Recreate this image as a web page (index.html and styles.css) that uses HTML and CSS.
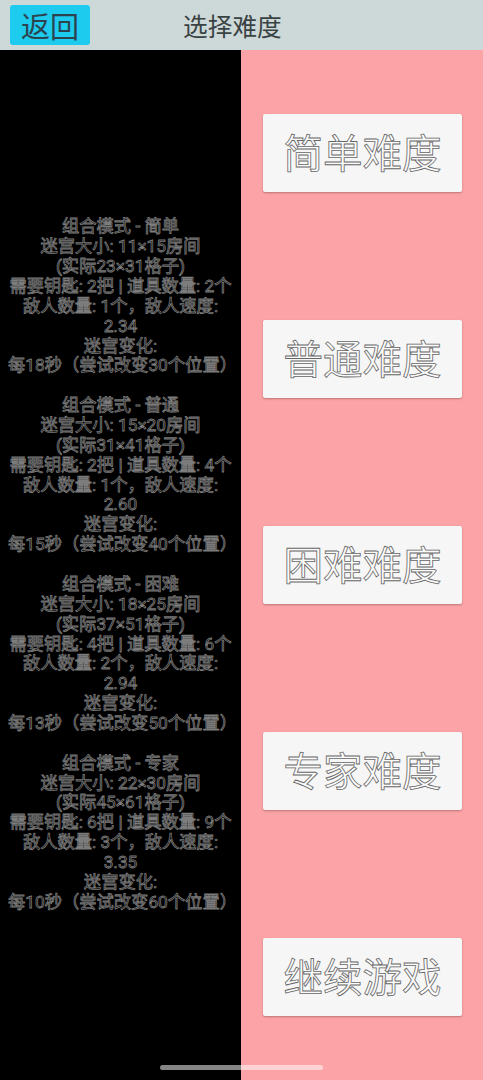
FILE: index.html
```html
<!DOCTYPE html>
<html lang="zh">
<head>
<meta charset="utf-8">
<title>选择难度</title>
<link rel="stylesheet" href="styles.css">
</head>
<body>
<div class="app">
  <header class="topbar">
    <button class="back">返回</button>
    <h1 class="title">选择难度</h1>
  </header>
  <main class="content">
    <section class="info">
      <p>组合模式 - 简单<br>迷宫大小: 11×15房间<br>(实际23×31格子)<br>需要钥匙: 2把 | 道具数量: 2个<br>敌人数量: 1个，敌人速度: 2.34<br>迷宫变化:<br>每18秒（尝试改变30个位置）</p>
      <p>组合模式 - 普通<br>迷宫大小: 15×20房间<br>(实际31×41格子)<br>需要钥匙: 2把 | 道具数量: 4个<br>敌人数量: 1个，敌人速度: 2.60<br>迷宫变化:<br>每15秒（尝试改变40个位置）</p>
      <p>组合模式 - 困难<br>迷宫大小: 18×25房间<br>(实际37×51格子)<br>需要钥匙: 4把 | 道具数量: 6个<br>敌人数量: 2个，敌人速度: 2.94<br>迷宫变化:<br>每13秒（尝试改变50个位置）</p>
      <p>组合模式 - 专家<br>迷宫大小: 22×30房间<br>(实际45×61格子)<br>需要钥匙: 6把 | 道具数量: 9个<br>敌人数量: 3个，敌人速度: 3.35<br>迷宫变化:<br>每10秒（尝试改变60个位置）</p>
    </section>
    <nav class="choices">
      <button class="choice">简单难度</button>
      <button class="choice">普通难度</button>
      <button class="choice">困难难度</button>
      <button class="choice">专家难度</button>
      <button class="choice">继续游戏</button>
    </nav>
  </main>
  <div class="home-bar"></div>
</div>
</body>
</html>
```
FILE: styles.css
```css
* { box-sizing: border-box; }
html, body { margin: 0; height: 100%; }
body { font-family: "Noto Sans CJK SC", "Noto Sans", sans-serif; overflow: hidden; }
.app { position: relative; display: flex; flex-direction: column; height: 1080px; }
.topbar {
  height: 50px;
  flex: none;
  display: flex;
  align-items: center;
  padding-left: 10px;
  background: #cdd8d8;
}
.back {
  width: 80px;
  height: 40px;
  padding: 0;
  border: 0;
  border-radius: 3px;
  background: #1dcbee;
  color: #2c4450;
  font: 29px/40px "Noto Sans CJK SC", sans-serif;
}
.title {
  margin: 0 0 0 93px;
  font-size: 24.7px;
  font-weight: 400;
  line-height: 50px;
  color: #3a4344;
}
.content { flex: 1; display: flex; min-height: 0; }
.info {
  width: 241px;
  flex: none;
  display: flex;
  flex-direction: column;
  justify-content: center;
  gap: 19.86px;
  padding: 0 8px;
  background: #000;
  color: #000;
  font-family: Roboto, "Noto Sans CJK SC", sans-serif;
  font-size: 17.3px;
  line-height: 19.86px;
  text-align: center;
  -webkit-text-stroke: .8px #7c7c7c;
}
.info p { margin: 0; }
.choices {
  flex: 1;
  display: flex;
  flex-direction: column;
  justify-content: space-around;
  align-items: center;
  padding-left: 1px;
  background: #fba3a6;
}
.choice {
  width: 199px;
  height: 78px;
  padding: 0 0 4px;
  border: 0;
  border-radius: 2px;
  background: #f6f6f6;
  box-shadow: 0 1px 2px rgba(120, 60, 60, .45);
  color: #fbfbfb;
  font: 39.5px/74px "Noto Sans CJK SC", sans-serif;
  -webkit-text-stroke: .8px #666;
}
.home-bar {
  position: absolute;
  left: 160px;
  top: 1065px;
  width: 163px;
  height: 5px;
  border-radius: 3px;
  background: rgba(255, 255, 255, .52);
}
```
